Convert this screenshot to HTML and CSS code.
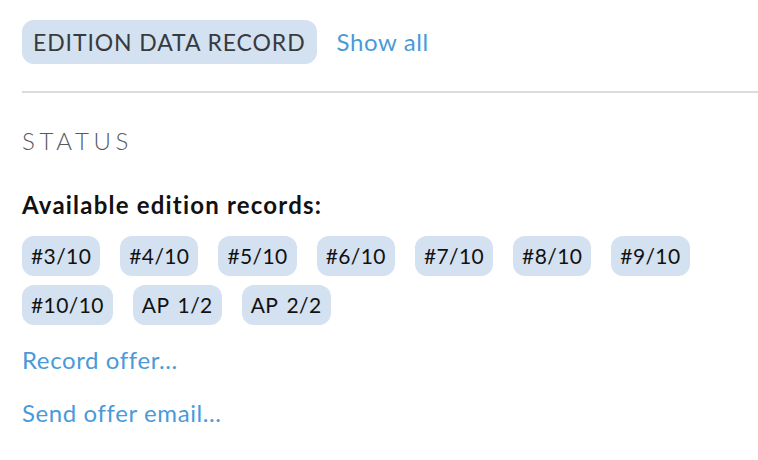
FILE: index.html
```html
<!DOCTYPE html>
<html lang="en">
<head>
  <meta charset="UTF-8" />
  <title>Edition data record</title>
  <link rel="stylesheet" href="styles.css">
</head>
<body>
  <div class="panel">
    <div class="header">
      <span class="tag">EDITION DATA RECORD</span>
      <a class="link show-all" href="#">Show all</a>
    </div>
    <hr class="divider">

    <h4 class="section-title">STATUS</h4>
    <p class="label">Available edition records:</p>
    <div class="chips">
      <span class="chip">#3/10</span>
      <span class="chip">#4/10</span>
      <span class="chip">#5/10</span>
      <span class="chip">#6/10</span>
      <span class="chip">#7/10</span>
      <span class="chip">#8/10</span>
      <span class="chip">#9/10</span>
      <span class="chip">#10/10</span>
      <span class="chip">AP 1/2</span>
      <span class="chip">AP 2/2</span>
    </div>

    <div class="actions">
      <a class="link" href="#">Record offer...</a>
      <a class="link" href="#">Send offer email...</a>
    </div>
  </div>
</body>
</html>
```

FILE: styles.css
```css
html, body {
  margin: 0;
  padding: 0;
  background: #fff;
}
body {
  font-family: Lato, "Noto Sans", sans-serif;
  color: #111;
}
.panel {
  padding: 20px 0 0 22px;
}
.header {
  display: flex;
  align-items: center;
  gap: 20px;
}
.tag {
  background-color: #d4e1f0;
  color: #363b41;
  font-size: 23px;
  letter-spacing: 0.9px;
  height: 44px;
  line-height: 44px;
  padding: 0 11px;
  border-radius: 12px;
}
.link {
  color: #4a9ad8;
  text-decoration: none;
  font-size: 24px;
  line-height: 28px;
  letter-spacing: 0.6px;
}
.divider {
  border: none;
  border-top: 2px solid #dcdcdc;
  margin: 27px 0 0 0;
}
.section-title {
  margin: 34px 0 0 0;
  font-size: 24px;
  line-height: 28px;
  font-weight: 300;
  letter-spacing: 4.6px;
  color: #555a60;
}
.label {
  margin: 36px 0 0 0;
  font-size: 24px;
  line-height: 28px;
  font-weight: bold;
  letter-spacing: 1.2px;
}
.chips {
  display: flex;
  flex-wrap: wrap;
  gap: 9px 20px;
  margin-top: 17px;
  max-width: 700px;
}
.chip {
  background-color: #d4e1f0;
  border-radius: 12px;
  font-size: 21px;
  letter-spacing: 0.4px;
  word-spacing: 3px;
  height: 40px;
  line-height: 40px;
  padding: 0 9px;
}
.actions {
  display: flex;
  flex-direction: column;
  align-items: flex-start;
  gap: 25px;
  margin-top: 21px;
}
```
